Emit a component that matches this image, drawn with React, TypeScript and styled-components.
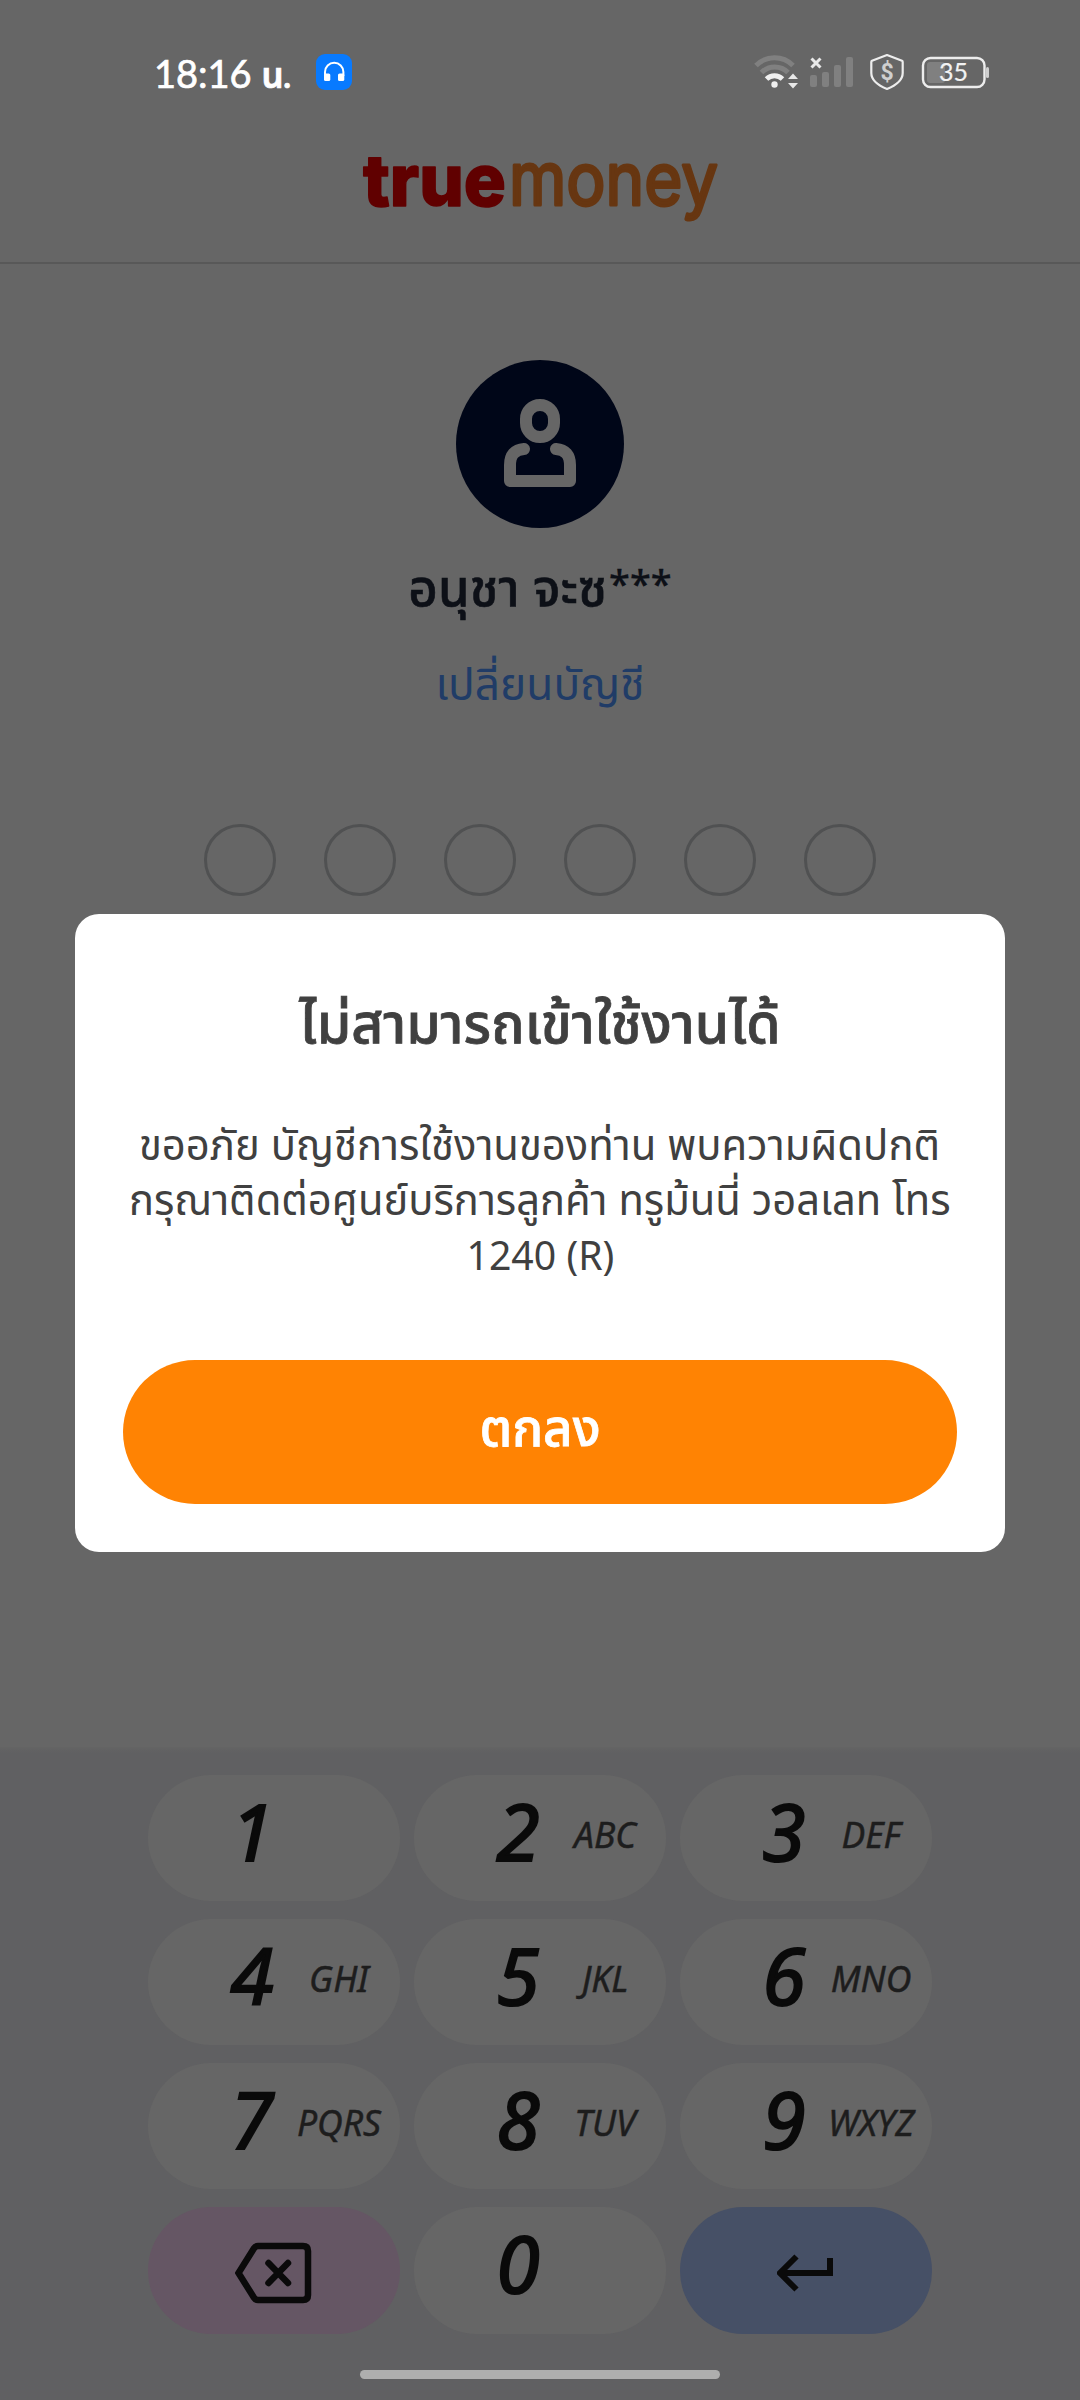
import React from "react";
import styled, { createGlobalStyle } from "styled-components";

const thai = `"Noto Sans Thai", "Noto Sans Thai UI", "Noto Sans", sans-serif`;

const Global = createGlobalStyle`
  *, *::before, *::after { box-sizing: border-box; }
  body { margin: 0; background: #666666; }
  button { border: 0; padding: 0; margin: 0; font: inherit; }
`;

const Screen = styled.div`
  position: relative;
  width: 1080px;
  height: 2400px;
  overflow: hidden;
  display: flex;
  flex-direction: column;
  background: #666666;
  font-family: ${thai};
`;

const StatusBar = styled.header`
  height: 124px;
  padding: 0 91px 20px 154px;
  display: flex;
  align-items: flex-end;
  justify-content: space-between;
`;

const StatusGroup = styled.div<{ $gap: number }>`
  height: 64px;
  display: flex;
  align-items: center;
  gap: ${(p) => p.$gap}px;
`;

const Clock = styled.span`
  width: 139px;
  padding-top: 3px;
  font: 400 38px/50px Lato, ${thai};
  color: #fff;
  -webkit-text-stroke: 0.7px #fff;
  white-space: nowrap;
`;

const ClockUnit = styled.span`
  font-weight: 600;
  font-size: 35px;
  letter-spacing: -0.5px;
`;

const BrandBar = styled.div`
  height: 140px;
  border-bottom: 2px solid #585858;
  display: flex;
  justify-content: center;
`;

const Account = styled.section`
  padding-top: 96px;
  display: flex;
  flex-direction: column;
  align-items: center;
`;

const Avatar = styled.div`
  width: 168px;
  height: 168px;
  padding-bottom: 3px;
  border-radius: 50%;
  background: #000618;
  display: flex;
  justify-content: center;
  align-items: center;
`;

const Line = styled.span<{ $stretch?: number }>`
  display: block;
  white-space: nowrap;
  transform: scaleX(${(p) => p.$stretch ?? 1});
`;

const AccountName = styled.h2`
  margin: 27px 0 0;
  height: 72px;
  font-size: 51px;
  line-height: 72px;
  font-weight: 500;
  color: #0d1017;
  -webkit-text-stroke: 0.6px #0d1017;
`;

const Mask = styled.span`
  margin-left: 2px;
  font-size: 38px;
  line-height: 1;
  vertical-align: 8px;
  -webkit-text-stroke: 0.3px #0d1017;
`;

const SwitchLink = styled.a`
  margin-top: 26px;
  font-size: 44px;
  line-height: 68px;
  color: #203c67;
`;

const PinRow = styled.div`
  margin-top: 103px;
  display: flex;
  gap: 48px;
`;

const PinDot = styled.span`
  width: 72px;
  height: 72px;
  border: 3px solid #505152;
  border-radius: 50%;
`;

const Keyboard = styled.section`
  margin-top: auto;
  height: 653px;
  padding-top: 28px;
  background: linear-gradient(#646464, #606062 6px);
  display: flex;
  flex-direction: column;
  align-items: center;
`;

const KeyGrid = styled.div`
  display: grid;
  grid-template-columns: repeat(3, 252px);
  grid-template-rows: repeat(3, 126px) 127px;
  column-gap: 14px;
  row-gap: 18px;
`;

const Key = styled.button<{ $tone?: string }>`
  padding-left: 60px;
  display: flex;
  align-items: baseline;
  border-radius: 63px;
  background: ${(p) => p.$tone ?? "#666666"};
  color: #0a0a0a;
`;

const IconKey = styled(Key)`
  padding: 5px 0 0;
  align-items: center;
  justify-content: center;
`;

const Digit = styled.span`
  width: 88px;
  display: flex;
  justify-content: center;
  font: italic 400 78px/113px "Noto Sans", sans-serif;
  -webkit-text-stroke: 2.2px #0a0a0a;
  stroke-linejoin: round;
`;

const Letters = styled.span`
  width: 86px;
  padding-bottom: 15px;
  display: flex;
  justify-content: center;
  font: italic 400 37px/40px "Noto Sans", sans-serif;
  color: #1d1d1d;
  -webkit-text-stroke: 0.5px #1d1d1d;
  transform: translateY(-13px) scaleX(0.96);
`;

const HomeBar = styled.div`
  margin-top: 36px;
  width: 360px;
  height: 9px;
  border-radius: 5px;
  background: #aeaeae;
`;

const Dialog = styled.div`
  position: absolute;
  left: 75px;
  top: 914px;
  width: 930px;
  height: 638px;
  padding: 72px 48px 48px;
  border-radius: 24px;
  background: #fff;
  color: #404040;
  display: flex;
  flex-direction: column;
  align-items: center;
`;

const DialogTitle = styled.h1`
  margin: 0;
  font-size: 56px;
  line-height: 80px;
  font-weight: 500;
  -webkit-text-stroke: 0.8px #404040;
`;

const DialogBody = styled.p`
  margin: 54px 0 0;
  font-size: 42px;
  line-height: 55px;
  display: flex;
  flex-direction: column;
  align-items: center;
`;

const PhoneLine = styled(Line)`
  font-size: 40px;
  padding-top: 1px;
`;

const OkButton = styled.button`
  margin-top: auto;
  width: 834px;
  height: 144px;
  padding-bottom: 4px;
  border-radius: 72px;
  background: #ff8303;
  color: #fff;
  font-size: 51px;
  font-weight: 500;
  -webkit-text-stroke: 0.8px #fff;
  display: flex;
  justify-content: center;
  align-items: center;
`;

const keys: [string, string][] = [
  ["1", ""], ["2", "ABC"], ["3", "DEF"],
  ["4", "GHI"], ["5", "JKL"], ["6", "MNO"],
  ["7", "PQRS"], ["8", "TUV"], ["9", "WXYZ"],
];

const HeadphonesIcon = () => (
  <svg width="36" height="36" viewBox="0 0 36 36">
    <rect width="36" height="36" rx="9" fill="#087aff" />
    <path d="M9 22v-4a9.2 9.2 0 0 1 18.4 0v4" fill="none" stroke="#fff" strokeWidth="2" />
    <rect x="8" y="19.5" width="6.3" height="7.5" rx="1.6" fill="#fff" />
    <rect x="22" y="19.5" width="6.3" height="7.5" rx="1.6" fill="#fff" />
  </svg>
);

const StatusIcons = () => (
  <svg width="235" height="52" viewBox="754 52 235 52" fill="none">
    <g stroke="#808080" strokeWidth="5">
      <path d="M756 65.5a26 26 0 0 1 37 0" />
      <path d="M761.5 72.5a18.5 18.5 0 0 1 26.5 0" />
    </g>
    <path d="M766.5 79a11.5 11.5 0 0 1 16 0" stroke="#f0f0f0" strokeWidth="5" />
    <circle cx="774.5" cy="84.5" r="3.2" fill="#f0f0f0" />
    <path d="M788 79l5-5.5 5 5.5zM788 83l5 5.5 5-5.5z" fill="#e8e8e8" />
    <path d="M811.5 58.5l9 9m0-9l-9 9" stroke="#e8e8e8" strokeWidth="3" />
    <g fill="#808080">
      <rect x="810" y="75" width="7" height="12" rx="2" />
      <rect x="822" y="72" width="7" height="15" rx="2" />
      <rect x="834" y="65" width="7" height="22" rx="2" />
      <rect x="846" y="57" width="7" height="30" rx="2" />
    </g>
    <path d="M887 55l15 5.8q.7.3.7 1.2v11q0 9.5-15.7 16q-15.7-6.5-15.7-16v-11q0-.9.7-1.2z" stroke="#ededed" strokeWidth="2.2" strokeLinejoin="round" />
    <text x="887" y="80" textAnchor="middle" fontFamily="Roboto" fontWeight="700" fontSize="23" fill="#cfcfcf">$</text>
    <rect x="927" y="62" width="18" height="21" rx="3" fill="#808080" />
    <rect x="923" y="58" width="61.5" height="29" rx="7.5" stroke="#ededed" strokeWidth="2.4" />
    <rect x="986" y="67" width="3" height="11" rx="1.5" fill="#cfcfcf" />
    <text x="953.5" y="81" textAnchor="middle" fontFamily="Lato" fontSize="25" fill="#f2f2f2" stroke="#f2f2f2" strokeWidth="0.2">35</text>
  </svg>
);

const Wordmark = () => (
  <svg width="480" height="136" viewBox="300 124 480 136">
    <g fontFamily="Inter" strokeLinejoin="round">
      <text x="363" y="205.5" textLength="143" lengthAdjust="spacingAndGlyphs" fontSize="72" fontWeight="800" fill="#600000" stroke="#600000" strokeWidth="1.5">true</text>
      <text x="509" y="205" textLength="209" lengthAdjust="spacingAndGlyphs" fontSize="73" fontWeight="400" fill="#673611" stroke="#673611" strokeWidth="3">money</text>
    </g>
  </svg>
);

const PersonIcon = () => (
  <svg width="72" height="88" viewBox="0 0 72 88" fill="none" stroke="#666666" strokeWidth="12">
    <rect x="22" y="6" width="28" height="32" rx="14" />
    <path d="M20 50Q6 51 6 66V82H66V66Q66 51 52 50" strokeLinecap="round" strokeLinejoin="round" />
  </svg>
);

const BackspaceIcon = () => (
  <svg width="78" height="62" viewBox="1 0 78 62" fill="none" stroke="#0a0a0a" strokeWidth="6.5">
    <path d="M24 4H69q5 0 5 5V53q0 5-5 5H24q-2.5 0-4-2.3L4.5 31 20 6.3Q21.5 4 24 4z" />
    <path d="M34.5 21l19.5 20m0-20l-19.5 20" strokeLinecap="round" />
  </svg>
);

const EnterIcon = () => (
  <svg width="58" height="38" viewBox="1.5 0 58 38" fill="none" stroke="#0a0a0a" strokeWidth="6">
    <path d="M54.5 4V19H5M21 2.5L4.5 19l16.5 16.5" />
  </svg>
);

export default function App() {
  return (
    <Screen>
      <Global />
      <StatusBar>
        <StatusGroup $gap={23}>
          <Clock>
            18:16 <ClockUnit>น.</ClockUnit>
          </Clock>
          <HeadphonesIcon />
        </StatusGroup>
        <StatusIcons />
      </StatusBar>
      <BrandBar>
        <Wordmark />
      </BrandBar>
      <Account>
        <Avatar>
          <PersonIcon />
        </Avatar>
        <AccountName>
          <Line>
            อนุชา จะซ<Mask>***</Mask>
          </Line>
        </AccountName>
        <SwitchLink>
          <Line $stretch={1.005}>เปลี่ยนบัญชี</Line>
        </SwitchLink>
        <PinRow>
          {[0, 1, 2, 3, 4, 5].map((i) => (
            <PinDot key={i} />
          ))}
        </PinRow>
      </Account>
      <Keyboard>
        <KeyGrid>
          {keys.map(([digit, letters]) => (
            <Key key={digit}>
              <Digit>{digit}</Digit>
              <Letters>{letters}</Letters>
            </Key>
          ))}
          <IconKey $tone="#655664">
            <BackspaceIcon />
          </IconKey>
          <Key>
            <Digit>0</Digit>
          </Key>
          <IconKey $tone="#465066">
            <EnterIcon />
          </IconKey>
        </KeyGrid>
        <HomeBar />
      </Keyboard>
      <Dialog role="dialog">
        <DialogTitle>
          <Line $stretch={0.987}>ไม่สามารถเข้าใช้งานได้</Line>
        </DialogTitle>
        <DialogBody>
          <Line $stretch={0.995}>ขออภัย บัญชีการใช้งานของท่าน พบความผิดปกติ</Line>
          <Line $stretch={0.993}>กรุณาติดต่อศูนย์บริการลูกค้า ทรูม้นนี่ วอลเลท โทร</Line>
          <PhoneLine $stretch={0.98}>1240 (R)</PhoneLine>
        </DialogBody>
        <OkButton>
          <Line>ตกลง</Line>
        </OkButton>
      </Dialog>
    </Screen>
  );
}
